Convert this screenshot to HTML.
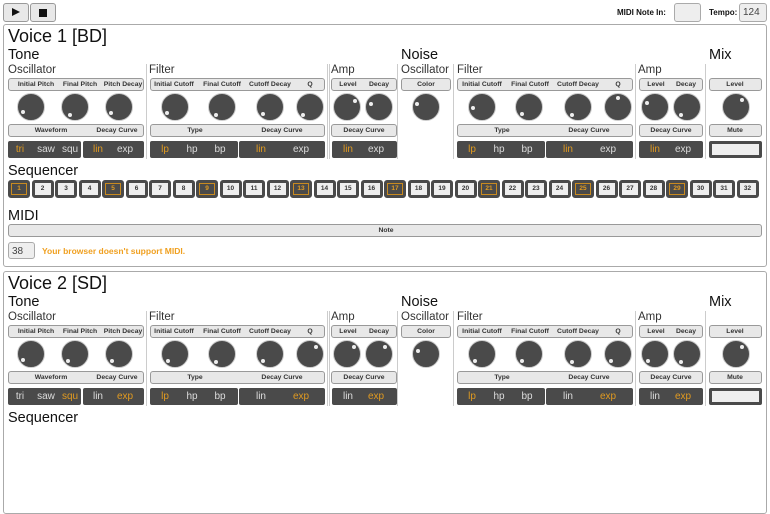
<!DOCTYPE html>
<html><head><meta charset="utf-8"><style>
*{box-sizing:border-box;margin:0;padding:0}
body{width:770px;height:420px;overflow:hidden;background:#fff;font-family:"Liberation Sans",Arial,sans-serif;color:#111;position:relative}
.a{position:absolute}
.btn{position:absolute;top:3px;height:19px;width:26px;border:1px solid #999;border-radius:3px;background:#e8e8e8}
.inp{position:absolute;border:1px solid #aaa;border-radius:3px;background:#eee;font-size:10px;color:#444;padding:3px 3px}
.voice{position:absolute;left:3px;width:764px;height:243px;border:1px solid #aaa;border-radius:3px;background:#fff}
.h1{position:absolute;left:4px;font-size:18px}
.h2{position:absolute;font-size:14.5px;top:22px}
.h3{position:absolute;font-size:11.5px;top:39px;color:#333}
.dv{position:absolute;top:39px;height:95px;width:1px;background:#ccc}
.bar{position:absolute;height:13px;background:#e8e8e8;border:1px solid #999;border-radius:3px;font-size:6.8px;font-weight:bold;color:#333}
.bar span{position:absolute;top:2px;transform:translateX(-50%);white-space:nowrap}
.k{position:absolute;top:68px;width:28px;height:28px;border-radius:50%;background:#4a4a4a;border:1.5px solid #ccc}
.k i{position:absolute;width:4px;height:4px;border-radius:50%;background:#eee}
.sw{position:absolute;top:116px;height:17px;background:#4a4a4a;border-radius:2px;font-size:10px;color:#ddd}
.sw span{position:absolute;top:2.5px;transform:translateX(-50%)}
.sw .on{color:#e09a20}
.st{position:absolute;top:155px;width:22px;height:18px;border:3px solid #4a4a4a;border-radius:3px;background:#eee;font-size:6.5px;font-weight:bold;text-align:center;line-height:12px;color:#333}
.st.o{background:#4a4a4a;border-color:#4a4a4a;color:#e09a20;outline:1px solid #c88a20;outline-offset:-4px}
</style></head><body>
<div class="btn" style="left:3px"><span class="a" style="left:8px;top:4px;width:0;height:0;border-left:8px solid #111;border-top:4.5px solid transparent;border-bottom:4.5px solid transparent"></span></div>
<div class="btn" style="left:30px"><span class="a" style="left:8px;top:5px;width:8px;height:8px;background:#111"></span></div>
<div class="a" style="left:617px;top:8px;font-size:8px;font-weight:bold">MIDI Note In:</div>
<div class="inp" style="left:674px;top:3px;width:27px;height:19px"></div>
<div class="a" style="left:709px;top:8px;font-size:8px;font-weight:bold">Tempo:</div>
<div class="inp" style="left:739px;top:3px;width:28px;height:19px">124</div>

<!-- VOICE 1 -->
<div class="voice" style="top:24px">
<div class="h1" style="top:1px">Voice 1 [BD]</div>
<div class="h2" style="left:4px">Tone</div><div class="h2" style="left:397px">Noise</div><div class="h2" style="left:705px">Mix</div>
<div class="h3" style="left:4px">Oscillator</div><div class="h3" style="left:145px">Filter</div><div class="h3" style="left:327px">Amp</div><div class="h3" style="left:397px">Oscillator</div><div class="h3" style="left:453px">Filter</div><div class="h3" style="left:634px">Amp</div>
<div class="dv" style="left:142px"></div><div class="dv" style="left:323px"></div><div class="dv" style="left:325px"></div><div class="dv" style="left:393px"></div><div class="dv" style="left:449px"></div><div class="dv" style="left:631px"></div><div class="dv" style="left:701px"></div>
<div class="bar" style="left:4px;top:53px;width:136px"><span style="left:27px">Initial Pitch</span><span style="left:71px">Final Pitch</span><span style="left:114px">Pitch Decay</span></div>
<div class="bar" style="left:146px;top:53px;width:175px"><span style="left:23px">Initial Cutoff</span><span style="left:71px">Final Cutoff</span><span style="left:119px">Cutoff Decay</span><span style="left:159px">Q</span></div>
<div class="bar" style="left:327px;top:53px;width:66px"><span style="left:16px">Level</span><span style="left:47px">Decay</span></div>
<div class="bar" style="left:397px;top:53px;width:50px"><span style="left:24px">Color</span></div>
<div class="bar" style="left:453px;top:53px;width:176px"><span style="left:24px">Initial Cutoff</span><span style="left:72px">Final Cutoff</span><span style="left:120px">Cutoff Decay</span><span style="left:160px">Q</span></div>
<div class="bar" style="left:635px;top:53px;width:64px"><span style="left:16px">Level</span><span style="left:46px">Decay</span></div>
<div class="bar" style="left:705px;top:53px;width:53px"><span style="left:25px">Level</span></div>
<div class="k" style="left:13px"><i style="left:3px;top:16px"></i></div>
<div class="k" style="left:57px"><i style="left:6px;top:19px"></i></div>
<div class="k" style="left:101px"><i style="left:3px;top:17px"></i></div>
<div class="k" style="left:157px"><i style="left:3px;top:17px"></i></div>
<div class="k" style="left:204px"><i style="left:5px;top:19px"></i></div>
<div class="k" style="left:252px"><i style="left:4px;top:18px"></i></div>
<div class="k" style="left:292px"><i style="left:4px;top:19px"></i></div>
<div class="k" style="left:329px"><i style="left:19px;top:5px"></i></div>
<div class="k" style="left:361px"><i style="left:3px;top:8px"></i></div>
<div class="k" style="left:408px"><i style="left:2px;top:8px"></i></div>
<div class="k" style="left:464px"><i style="left:2px;top:12px"></i></div>
<div class="k" style="left:511px"><i style="left:4px;top:18px"></i></div>
<div class="k" style="left:560px"><i style="left:5px;top:19px"></i></div>
<div class="k" style="left:600px"><i style="left:11px;top:2px"></i></div>
<div class="k" style="left:637px"><i style="left:3px;top:7px"></i></div>
<div class="k" style="left:669px"><i style="left:5px;top:19px"></i></div>
<div class="k" style="left:718px"><i style="left:17px;top:4px"></i></div>
<div class="bar" style="left:4px;top:99px;width:136px"><span style="left:42px">Waveform</span><span style="left:108px">Decay Curve</span></div>
<div class="bar" style="left:146px;top:99px;width:175px"><span style="left:44px">Type</span><span style="left:131px">Decay Curve</span></div>
<div class="bar" style="left:327px;top:99px;width:66px"><span style="left:32px">Decay Curve</span></div>
<div class="bar" style="left:453px;top:99px;width:176px"><span style="left:44px">Type</span><span style="left:131px">Decay Curve</span></div>
<div class="bar" style="left:635px;top:99px;width:64px"><span style="left:31px">Decay Curve</span></div>
<div class="bar" style="left:705px;top:99px;width:53px"><span style="left:25px">Mute</span></div>
<div class="sw" style="left:4px;width:73px"><span class="on" style="left:12px">tri</span><span style="left:38px">saw</span><span style="left:62px">squ</span></div>
<div class="sw" style="left:79px;width:61px"><span class="on" style="left:15px">lin</span><span style="left:42px">exp</span></div>
<div class="sw" style="left:146px;width:88px"><span class="on" style="left:15px">lp</span><span style="left:42px">hp</span><span style="left:70px">bp</span></div>
<div class="sw" style="left:235px;width:86px"><span class="on" style="left:22px">lin</span><span style="left:62px">exp</span></div>
<div class="sw" style="left:328px;width:65px"><span class="on" style="left:16px">lin</span><span style="left:44px">exp</span></div>
<div class="sw" style="left:453px;width:88px"><span class="on" style="left:15px">lp</span><span style="left:42px">hp</span><span style="left:70px">bp</span></div>
<div class="sw" style="left:542px;width:87px"><span class="on" style="left:22px">lin</span><span style="left:62px">exp</span></div>
<div class="sw" style="left:635px;width:64px"><span class="on" style="left:16px">lin</span><span style="left:44px">exp</span></div>
<div class="sw" style="left:705px;width:53px;border:3px solid #4a4a4a;background:#eee"></div>
<div class="h2" style="left:4px;top:138px">Sequencer</div>
<div class="st o" style="left:4px">1</div><div class="st" style="left:27.5px">2</div><div class="st" style="left:51px">3</div><div class="st" style="left:74.5px">4</div><div class="st o" style="left:98px">5</div><div class="st" style="left:121.5px">6</div><div class="st" style="left:145px">7</div><div class="st" style="left:168.5px">8</div><div class="st o" style="left:192px">9</div><div class="st" style="left:215.5px">10</div><div class="st" style="left:239px">11</div><div class="st" style="left:262.5px">12</div><div class="st o" style="left:286px">13</div><div class="st" style="left:309.5px">14</div><div class="st" style="left:333px">15</div><div class="st" style="left:356.5px">16</div><div class="st o" style="left:380px">17</div><div class="st" style="left:403.5px">18</div><div class="st" style="left:427px">19</div><div class="st" style="left:450.5px">20</div><div class="st o" style="left:474px">21</div><div class="st" style="left:497.5px">22</div><div class="st" style="left:521px">23</div><div class="st" style="left:544.5px">24</div><div class="st o" style="left:568px">25</div><div class="st" style="left:591.5px">26</div><div class="st" style="left:615px">27</div><div class="st" style="left:638.5px">28</div><div class="st o" style="left:662px">29</div><div class="st" style="left:685.5px">30</div><div class="st" style="left:709px">31</div><div class="st" style="left:732.5px">32</div>
<div class="h2" style="left:4px;top:183px">MIDI</div>
<div class="bar" style="left:4px;top:199px;width:754px"><span style="left:377px">Note</span></div>
<div class="inp" style="left:4px;top:217px;width:27px;height:17px">38</div>
<div class="a" style="left:38px;top:221px;font-size:8.5px;font-weight:bold;color:#f0a020">Your browser doesn't support MIDI.</div>
</div>

<!-- VOICE 2 -->
<div class="voice" style="top:271px">
<div class="h1" style="top:1px">Voice 2 [SD]</div>
<div class="h2" style="left:4px">Tone</div><div class="h2" style="left:397px">Noise</div><div class="h2" style="left:705px">Mix</div>
<div class="h3" style="left:4px">Oscillator</div><div class="h3" style="left:145px">Filter</div><div class="h3" style="left:327px">Amp</div><div class="h3" style="left:397px">Oscillator</div><div class="h3" style="left:453px">Filter</div><div class="h3" style="left:634px">Amp</div>
<div class="dv" style="left:142px"></div><div class="dv" style="left:323px"></div><div class="dv" style="left:325px"></div><div class="dv" style="left:393px"></div><div class="dv" style="left:449px"></div><div class="dv" style="left:631px"></div><div class="dv" style="left:701px"></div>
<div class="bar" style="left:4px;top:53px;width:136px"><span style="left:27px">Initial Pitch</span><span style="left:71px">Final Pitch</span><span style="left:114px">Pitch Decay</span></div>
<div class="bar" style="left:146px;top:53px;width:175px"><span style="left:23px">Initial Cutoff</span><span style="left:71px">Final Cutoff</span><span style="left:119px">Cutoff Decay</span><span style="left:159px">Q</span></div>
<div class="bar" style="left:327px;top:53px;width:66px"><span style="left:16px">Level</span><span style="left:47px">Decay</span></div>
<div class="bar" style="left:397px;top:53px;width:50px"><span style="left:24px">Color</span></div>
<div class="bar" style="left:453px;top:53px;width:176px"><span style="left:24px">Initial Cutoff</span><span style="left:72px">Final Cutoff</span><span style="left:120px">Cutoff Decay</span><span style="left:160px">Q</span></div>
<div class="bar" style="left:635px;top:53px;width:64px"><span style="left:16px">Level</span><span style="left:46px">Decay</span></div>
<div class="bar" style="left:705px;top:53px;width:53px"><span style="left:25px">Level</span></div>
<div class="k" style="left:13px"><i style="left:3px;top:17px"></i></div>
<div class="k" style="left:57px"><i style="left:4px;top:18px"></i></div>
<div class="k" style="left:101px"><i style="left:4px;top:18px"></i></div>
<div class="k" style="left:157px"><i style="left:4px;top:18px"></i></div>
<div class="k" style="left:204px"><i style="left:5px;top:19px"></i></div>
<div class="k" style="left:252px"><i style="left:4px;top:18px"></i></div>
<div class="k" style="left:292px"><i style="left:17px;top:4px"></i></div>
<div class="k" style="left:329px"><i style="left:18px;top:4px"></i></div>
<div class="k" style="left:361px"><i style="left:17px;top:4px"></i></div>
<div class="k" style="left:408px"><i style="left:3px;top:8px"></i></div>
<div class="k" style="left:464px"><i style="left:4px;top:18px"></i></div>
<div class="k" style="left:511px"><i style="left:4px;top:18px"></i></div>
<div class="k" style="left:560px"><i style="left:5px;top:19px"></i></div>
<div class="k" style="left:600px"><i style="left:4px;top:18px"></i></div>
<div class="k" style="left:637px"><i style="left:4px;top:18px"></i></div>
<div class="k" style="left:669px"><i style="left:5px;top:19px"></i></div>
<div class="k" style="left:718px"><i style="left:17px;top:4px"></i></div>
<div class="bar" style="left:4px;top:99px;width:136px"><span style="left:42px">Waveform</span><span style="left:108px">Decay Curve</span></div>
<div class="bar" style="left:146px;top:99px;width:175px"><span style="left:44px">Type</span><span style="left:131px">Decay Curve</span></div>
<div class="bar" style="left:327px;top:99px;width:66px"><span style="left:32px">Decay Curve</span></div>
<div class="bar" style="left:453px;top:99px;width:176px"><span style="left:44px">Type</span><span style="left:131px">Decay Curve</span></div>
<div class="bar" style="left:635px;top:99px;width:64px"><span style="left:31px">Decay Curve</span></div>
<div class="bar" style="left:705px;top:99px;width:53px"><span style="left:25px">Mute</span></div>
<div class="sw" style="left:4px;width:73px"><span style="left:12px">tri</span><span style="left:38px">saw</span><span class="on" style="left:62px">squ</span></div>
<div class="sw" style="left:79px;width:61px"><span style="left:15px">lin</span><span class="on" style="left:42px">exp</span></div>
<div class="sw" style="left:146px;width:88px"><span class="on" style="left:15px">lp</span><span style="left:42px">hp</span><span style="left:70px">bp</span></div>
<div class="sw" style="left:235px;width:86px"><span style="left:22px">lin</span><span class="on" style="left:62px">exp</span></div>
<div class="sw" style="left:328px;width:65px"><span style="left:16px">lin</span><span class="on" style="left:44px">exp</span></div>
<div class="sw" style="left:453px;width:88px"><span class="on" style="left:15px">lp</span><span style="left:42px">hp</span><span style="left:70px">bp</span></div>
<div class="sw" style="left:542px;width:87px"><span style="left:22px">lin</span><span class="on" style="left:62px">exp</span></div>
<div class="sw" style="left:635px;width:64px"><span style="left:16px">lin</span><span class="on" style="left:44px">exp</span></div>
<div class="sw" style="left:705px;width:53px;border:3px solid #4a4a4a;background:#eee"></div>
<div class="h2" style="left:4px;top:138px">Sequencer</div>
</div>
</body></html>
